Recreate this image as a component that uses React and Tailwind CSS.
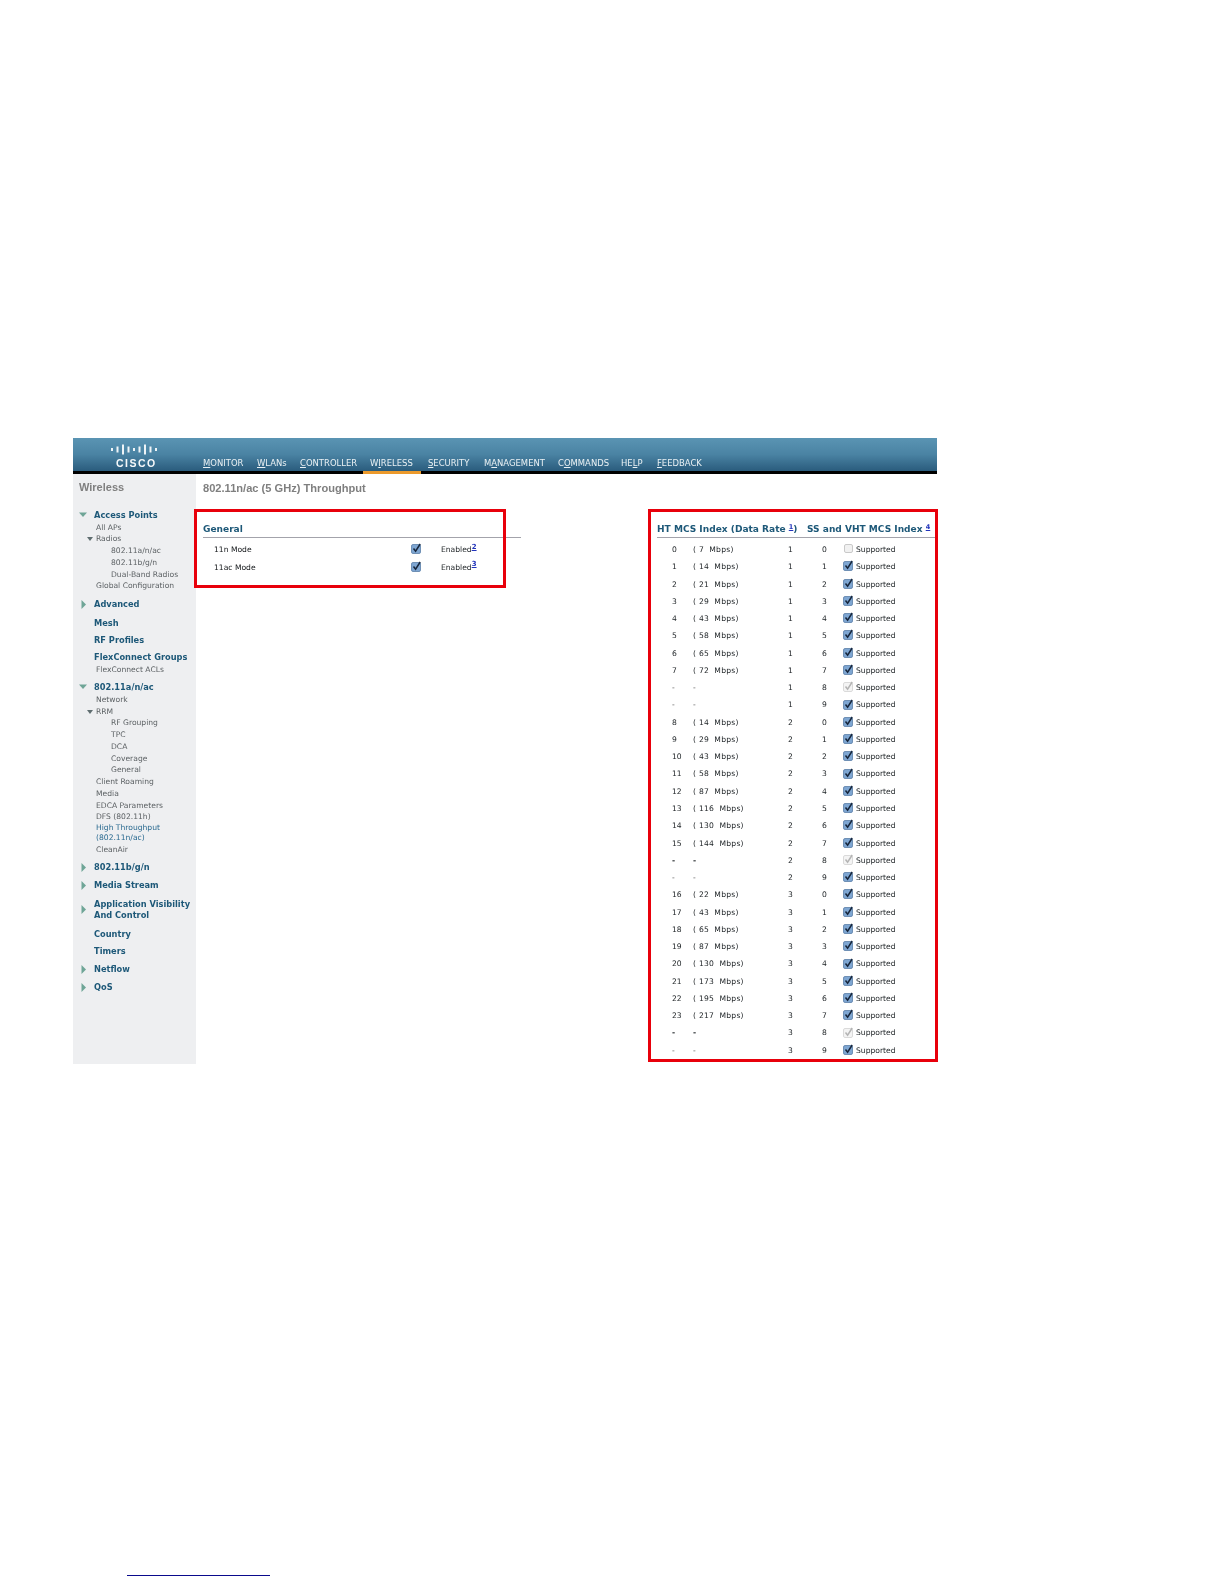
const verdana = "font-['DejaVu_Sans',sans-serif]"

const navItems = [
  { before: '', key: 'M', after: 'ONITOR', cls: 'w-[54px]' },
  { before: '', key: 'W', after: 'LANs', cls: 'w-[43px]' },
  { before: '', key: 'C', after: 'ONTROLLER', cls: 'w-[70px]' },
  { before: 'W', key: 'I', after: 'RELESS', cls: 'w-[58px]' },
  { before: '', key: 'S', after: 'ECURITY', cls: 'w-[56px]' },
  { before: 'M', key: 'A', after: 'NAGEMENT', cls: 'w-[74px]' },
  { before: 'C', key: 'O', after: 'MMANDS', cls: 'w-[63px]' },
  { before: 'HE', key: 'L', after: 'P', cls: 'w-[36px]' },
  { before: '', key: 'F', after: 'EEDBACK', cls: 'w-[60px]' },
]

// sidebar rows; kind: top = bold heading, sub = plain link, deep = third level
const sideItems = [
  { label: 'Access Points', kind: 'top', arrow: 'down', cls: 'mt-0' },
  { label: 'All APs', kind: 'sub', cls: 'mt-[0.5px]' },
  { label: 'Radios', kind: 'sub', small: true, cls: 'mt-0' },
  { label: '802.11a/n/ac', kind: 'deep', cls: 'mt-0' },
  { label: '802.11b/g/n', kind: 'deep', cls: 'mt-0' },
  { label: 'Dual-Band Radios', kind: 'deep', cls: 'mt-0' },
  { label: 'Global Configuration', kind: 'sub', cls: 'mt-0' },
  { label: 'Advanced', kind: 'top', arrow: 'right', cls: 'mt-[5.5px]' },
  { label: 'Mesh', kind: 'top', cls: 'mt-[7px]' },
  { label: 'RF Profiles', kind: 'top', cls: 'mt-[5px]' },
  { label: 'FlexConnect Groups', kind: 'top', cls: 'mt-[5px]' },
  { label: 'FlexConnect ACLs', kind: 'sub', cls: 'mt-[1px]' },
  { label: '802.11a/n/ac', kind: 'top', arrow: 'down', cls: 'mt-[6px]' },
  { label: 'Network', kind: 'sub', cls: 'mt-[0.5px]' },
  { label: 'RRM', kind: 'sub', small: true, cls: 'mt-0' },
  { label: 'RF Grouping', kind: 'deep', cls: 'mt-0' },
  { label: 'TPC', kind: 'deep', cls: 'mt-0' },
  { label: 'DCA', kind: 'deep', cls: 'mt-0' },
  { label: 'Coverage', kind: 'deep', cls: 'mt-0' },
  { label: 'General', kind: 'deep', cls: 'mt-0' },
  { label: 'Client Roaming', kind: 'sub', cls: 'mt-0' },
  { label: 'Media', kind: 'sub', cls: 'mt-0' },
  { label: 'EDCA Parameters', kind: 'sub', cls: 'mt-0' },
  { label: 'DFS (802.11h)', kind: 'sub', cls: 'mt-0' },
  { label: 'High Throughput', kind: 'sub', active: true, cls: 'mt-[-1px]' },
  { label: '(802.11n/ac)', kind: 'sub', active: true, cls: 'mt-[-1.5px]' },
  { label: 'CleanAir', kind: 'sub', cls: 'mt-0' },
  { label: '802.11b/g/n', kind: 'top', arrow: 'right', cls: 'mt-[5px]' },
  { label: 'Media Stream', kind: 'top', arrow: 'right', cls: 'mt-[6px]' },
  { label: 'Application Visibility', kind: 'top', arrow: 'right-low', cls: 'mt-[7px]' },
  { label: 'And Control', kind: 'top', cls: 'mt-[-0.5px]' },
  { label: 'Country', kind: 'top', cls: 'mt-[7px]' },
  { label: 'Timers', kind: 'top', cls: 'mt-[5px]' },
  { label: 'Netflow', kind: 'top', arrow: 'right', cls: 'mt-[6px]' },
  { label: 'QoS', kind: 'top', arrow: 'right', cls: 'mt-[6px]' },
]

const rateRows = [
  ['0', '7', 1, 0], ['1', '14', 1, 1], ['2', '21', 1, 2], ['3', '29', 1, 3], ['4', '43', 1, 4],
  ['5', '58', 1, 5], ['6', '65', 1, 6], ['7', '72', 1, 7], ['-', null, 1, 8], ['-', null, 1, 9],
  ['8', '14', 2, 0], ['9', '29', 2, 1], ['10', '43', 2, 2], ['11', '58', 2, 3], ['12', '87', 2, 4],
  ['13', '116', 2, 5], ['14', '130', 2, 6], ['15', '144', 2, 7], ['-', null, 2, 8], ['-', null, 2, 9],
  ['16', '22', 3, 0], ['17', '43', 3, 1], ['18', '65', 3, 2], ['19', '87', 3, 3], ['20', '130', 3, 4],
  ['21', '173', 3, 5], ['22', '195', 3, 6], ['23', '217', 3, 7], ['-', null, 3, 8], ['-', null, 3, 9],
]

function CiscoLogo() {
  const bars = [3, 6, 10, 6, 3, 6, 10, 6, 3]
  return (
    <div className="flex w-[125px] flex-col items-start pl-[38px] pt-[6px]">
      <svg width="46" height="11" viewBox="0 0 46 11">
        {bars.map((h, i) => (
          <rect key={i} x={i * 5.5} y={(11 - h) / 2} width="2" height={h} fill="#eef4f7" />
        ))}
      </svg>
      <span className="mt-[1.5px] ml-[5px] font-['Liberation_Sans',sans-serif] text-[10.5px] leading-[12px] font-bold tracking-[1.5px] text-[#f6f9fa]">
        CISCO
      </span>
    </div>
  )
}

function Arrow({ dir }) {
  if (dir === 'down') {
    return (
      <svg className="absolute left-[6px] top-[3px]" width="9" height="6" viewBox="0 0 9 6">
        <path d="M0 0.5H8L4 5Z" fill="#6fa597" />
      </svg>
    )
  }
  return (
    <svg className={`absolute left-[8px] ${dir === 'right-low' ? 'top-[7px]' : 'top-[2px]'}`} width="6" height="9" viewBox="0 0 6 9">
      <path d="M0.5 0L5 4.5L0.5 9Z" fill="#6fa597" />
    </svg>
  )
}

function SideRow({ item }) {
  if (item.kind === 'top') {
    return (
      <div className={`relative h-[12px] pl-[21px] text-[8.25px] leading-[12px] font-bold whitespace-nowrap text-[#1d5878] ${item.cls}`}>
        {item.arrow && <Arrow dir={item.arrow} />}
        {item.label}
      </div>
    )
  }
  const pad = item.kind === 'deep' ? 'pl-[38px]' : 'pl-[23px]'
  const color = item.active ? 'text-[#2a6a90]' : 'text-[#5c6164]'
  return (
    <div className={`relative h-[11.75px] text-[7.6px] leading-[11.75px] ${pad} ${color} ${item.cls}`}>
      {item.small && (
        <svg className="absolute left-[14px] top-[4px]" width="6" height="4" viewBox="0 0 6 4">
          <path d="M0 0H6L3 4Z" fill="#5f6d70" />
        </svg>
      )}
      {item.label}
    </div>
  )
}

function CheckBox({ state }) {
  // state: on, off, grey
  if (state === 'off') {
    return <span className="mx-[1px] block h-[9px] w-[9px] -translate-y-[1px] rounded-[2px] border border-[#c9c9c9] bg-[#f1f1f1]" />
  }
  const grey = state === 'grey'
  return (
    <svg width="11" height="11" viewBox="0 0 11 11" className="block -translate-y-[1px]">
      <rect x="0.5" y="1.5" width="9" height="9" rx="1.5" fill={grey ? '#f4f4f4' : '#7ea6d2'} stroke={grey ? '#d2d2d2' : '#5b7fa8'} strokeWidth="0.8" />
      <path d="M2.5 5.5L4.6 8.2L9.2 1" fill="none" stroke={grey ? '#b4b4b4' : '#17263c'} strokeWidth="1.5" />
    </svg>
  )
}

function RateRow({ row }) {
  const [idx, rate, stream, vht] = row
  let state = 'on'
  if (stream === 1 && vht === 0) state = 'off'
  if (vht === 8) state = 'grey'
  const dashBold = idx === '-' && vht === 8 && stream > 1
  return (
    <div className="grid h-[17.27px] grid-cols-[21px_95px_34px_21px_1fr] items-center pl-[15px] text-[7.6px] leading-[17.27px] text-[#22272a]">
      <span className={dashBold ? 'font-bold' : idx === '-' ? 'text-[#555]' : ''}>{idx}</span>
      <span className={`whitespace-pre tracking-[0.25px] ${dashBold ? 'font-bold' : rate ? '' : 'text-[#555]'}`}>
        {rate ? `( ${rate}  Mbps)` : '-'}
      </span>
      <span>{stream}</span>
      <span>{vht}</span>
      <span className="flex items-center gap-[2px]">
        <CheckBox state={state} />
        <span>Supported</span>
      </span>
    </div>
  )
}

function ModeRow({ label, note }) {
  return (
    <div className="flex h-[17.6px] items-center text-[7.6px] text-[#111417]">
      <span className="w-[208px] pl-[11px]">{label}</span>
      <span className="w-[30px]">
        <CheckBox state="on" />
      </span>
      <span className="text-[#22272a]">
        Enabled
        <sup className="text-[7px] font-bold text-[#2233bb] underline">{note}</sup>
      </span>
    </div>
  )
}

export default function App() {
  return (
    <div className={`relative h-[1584px] overflow-hidden bg-white ${verdana}`}>
      <div className="ml-[73px] w-[864px] pt-[438px] blur-[0.3px]">
        {/* top bar */}
        <div className="flex h-[36px] border-b-[3px] border-black bg-gradient-to-b from-[#5a94b3] via-[#4a83a3] to-[#2a5c7d]">
          <CiscoLogo />
          <nav className="flex items-end pl-[5px]">
            {navItems.map((n, i) => (
              <div key={i} className={`relative h-[33px] pt-[18px] text-[8.45px] leading-[14px] whitespace-nowrap text-[#eaf1f4] ${n.cls}`}>
                {n.before}
                <span className="underline">{n.key}</span>
                {n.after}
                {i === 3 && <span className="absolute bottom-[-3px] left-[-7px] h-[3px] w-[58px] bg-[#ec9a2c]" />}
              </div>
            ))}
          </nav>
        </div>

        <div className="flex h-[590px]">
          {/* sidebar */}
          <aside className="w-[123px] bg-[#eeeff1]">
            <div className="pl-[6px] pt-[6px] font-['Liberation_Sans',sans-serif] text-[11px] leading-[14px] font-bold text-[#7f7f7f]">Wireless</div>
            <div className="mt-[15px]">
              {sideItems.map((item, i) => (
                <SideRow key={i} item={item} />
              ))}
            </div>
          </aside>

          {/* main */}
          <main className="flex-1 pl-[7px]">
            <h1 className="pt-[6px] font-['Liberation_Sans',sans-serif] text-[11.1px] leading-[16px] font-bold text-[#7f7f7f]">802.11n/ac (5 GHz) Throughput</h1>
            <div className="mt-[25px] flex">
              <section className="w-[318px]">
                <h2 className="h-[17px] border-b border-[#a3a3ab] text-[9.05px] leading-[16px] font-bold text-[#1d5878]">General</h2>
                <div className="mt-[3px]">
                  <ModeRow label="11n Mode" note="2" />
                  <ModeRow label="11ac Mode" note="3" />
                </div>
              </section>

              <section className="ml-[136px] w-[279px]">
                <div className="flex h-[17px] border-b border-[#a3a3ab] text-[9.05px] leading-[16px] font-bold whitespace-nowrap text-[#1d5878]">
                  <span className="w-[150px]">
                    HT MCS Index (Data Rate <sup className="text-[6.5px] text-[#2233bb] underline">1</sup>)
                  </span>
                  <span>
                    SS and VHT MCS Index <sup className="text-[6.5px] text-[#2233bb] underline">4</sup>
                  </span>
                </div>
                <div className="mt-[3px]">
                  {rateRows.map((row, i) => (
                    <RateRow key={i} row={row} />
                  ))}
                </div>
              </section>
            </div>
          </main>
        </div>
      </div>

      {/* red callouts */}
      <div className="absolute left-[194px] top-[509px] h-[79px] w-[312px] border-[3px] border-[#e8000b]" />
      <div className="absolute left-[648px] top-[509px] h-[553px] w-[290px] border-[3px] border-[#e8000b]" />

      {/* stray link rule at the page foot */}
      <div className="absolute left-[127px] top-[1575px] h-[1px] w-[143px] bg-[#0a0a8c]" />
    </div>
  )
}
